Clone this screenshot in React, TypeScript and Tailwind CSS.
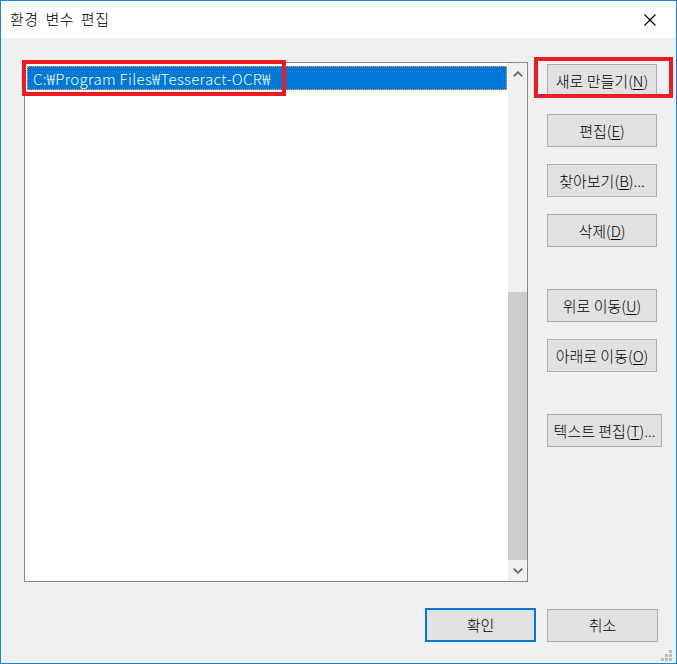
import React from "react";

const font = { fontFamily: '"Noto Sans CJK KR", "Noto Sans", sans-serif' };

function Mn({ label, k, tail = "" }: { label: string; k: string; tail?: string }) {
  return (
    <span className="whitespace-nowrap">
      {label}(<span className="underline underline-offset-2">{k}</span>){tail}
    </span>
  );
}

function SideButton({ children, w = "w-[110px]", mt }: { children: React.ReactNode; w?: string; mt: string }) {
  return (
    <button
      className={`${w} ${mt} h-[33px] shrink-0 bg-[#e1e1e1] border border-[#adadad] text-[15px] text-black flex items-center justify-center leading-none`}
    >
      {children}
    </button>
  );
}

export default function App() {
  return (
    <div
      className="relative w-[677px] h-[664px] border border-[#1883d7] bg-[#f0f0f0] flex flex-col overflow-hidden font-light [word-spacing:3px]"
      style={font}
    >
      {/* Title bar */}
      <div className="h-[37px] bg-white flex items-center justify-between pl-[9px] pr-[20px] shrink-0">
        <span className="text-[15px] text-black tracking-[0.5px]">환경 변수 편집</span>
        <svg width="12" height="12" viewBox="0 0 12 12">
          <path d="M0.5 0.5 L11.5 11.5 M11.5 0.5 L0.5 11.5" stroke="#000" strokeWidth="1.1" />
        </svg>
      </div>

      {/* Body */}
      <div className="flex pl-[23px] pt-[24px]">
        {/* List box */}
        <div className="w-[504px] h-[520px] border border-[#828790] bg-white flex shrink-0">
          <div className="flex-1 pt-[3px] pl-[2px] pr-px">
            <div className="h-[24px] bg-[#0078d7] border border-dotted border-[#f7a14a] flex items-center pl-[5px] text-[15px] text-white leading-none tracking-[0.35px] [word-spacing:0px]">
              C:₩Program Files₩Tesseract-OCR₩
            </div>
          </div>
          <div className="w-[19px] flex flex-col bg-[#f0f0f0]">
            <div className="h-[21px] flex items-center justify-center">
              <svg width="10" height="6" viewBox="0 0 10 6">
                <polyline points="0.8,5.4 5,1.2 9.2,5.4" fill="none" stroke="#606060" strokeWidth="1.6" />
              </svg>
            </div>
            <div className="flex-1" />
            <div className="h-[268px] bg-[#cdcdcd]" />
            <div className="h-[21px] flex items-center justify-center">
              <svg width="10" height="6" viewBox="0 0 10 6">
                <polyline points="0.8,0.6 5,4.8 9.2,0.6" fill="none" stroke="#606060" strokeWidth="1.6" />
              </svg>
            </div>
          </div>
        </div>

        {/* Side buttons */}
        <div className="flex flex-col ml-[19px] mt-[2px]">
          <SideButton mt="mt-0"><Mn label="새로 만들기" k="N" /></SideButton>
          <SideButton mt="mt-[17px]"><Mn label="편집" k="E" /></SideButton>
          <SideButton mt="mt-[17px]"><Mn label="찾아보기" k="B" tail="..." /></SideButton>
          <SideButton mt="mt-[17px]"><Mn label="삭제" k="D" /></SideButton>
          <SideButton mt="mt-[42px]"><Mn label="위로 이동" k="U" /></SideButton>
          <SideButton mt="mt-[17px]"><Mn label="아래로 이동" k="O" /></SideButton>
          <SideButton mt="mt-[42px]" w="w-[115px]"><Mn label="텍스트 편집" k="T" tail="..." /></SideButton>
        </div>
      </div>

      {/* Bottom buttons */}
      <div className="flex justify-end items-start gap-[11px] pr-[18px] mt-[26px]">
        <button className="w-[111px] h-[34px] bg-[#e1e1e1] border-2 border-[#0078d7] text-[15px] text-black flex items-center justify-center">
          확인
        </button>
        <button className="w-[111px] h-[33px] mt-px bg-[#e1e1e1] border border-[#adadad] text-[15px] text-black flex items-center justify-center">
          취소
        </button>
      </div>

      {/* Resize grip */}
      <svg className="absolute right-[4px] bottom-[2px]" width="11" height="11" viewBox="0 0 11 11">
        <g fill="#bcbcbc">
          <rect x="8" y="0" width="3" height="3" />
          <rect x="4" y="4" width="3" height="3" />
          <rect x="8" y="4" width="3" height="3" />
          <rect x="0" y="8" width="3" height="3" />
          <rect x="4" y="8" width="3" height="3" />
          <rect x="8" y="8" width="3" height="3" />
        </g>
      </svg>

      {/* Red annotation boxes */}
      <div className="absolute left-[21px] top-[59px] w-[264px] h-[36px] border-4 border-[#ed1c24] pointer-events-none" />
      <div className="absolute left-[533px] top-[56px] w-[139px] h-[41px] border-4 border-[#ed1c24] pointer-events-none" />
    </div>
  );
}
